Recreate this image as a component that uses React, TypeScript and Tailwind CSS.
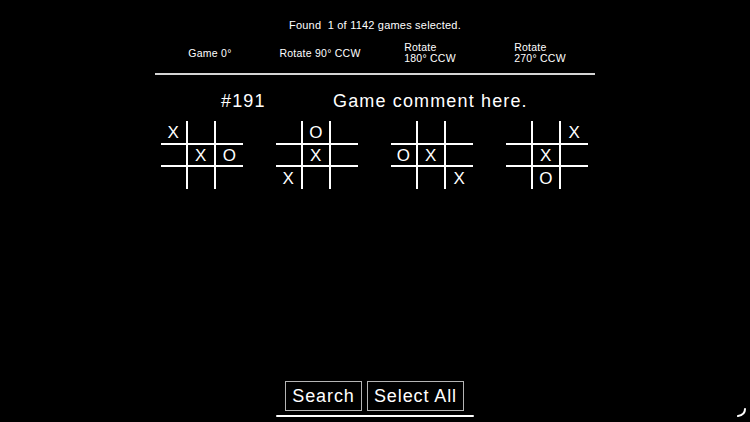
import React from 'react'

type Mark = 'X' | 'O' | ''

const boards: Mark[][] = [
  ['X', '', '', '', 'X', 'O', '', '', ''],
  ['', 'O', '', '', 'X', '', 'X', '', ''],
  ['', '', '', 'O', 'X', '', '', '', 'X'],
  ['', '', 'X', '', 'X', '', '', 'O', ''],
]

const columns = [
  ['Game 0°'],
  ['Rotate 90° CCW'],
  ['Rotate', '180° CCW'],
  ['Rotate', '270° CCW'],
]

function Board({ cells }: { cells: Mark[] }) {
  return (
    <div className="grid grid-cols-[27px_28px_27px] grid-rows-[24px_22px_22px] w-[82px] h-[68px]">
      {cells.map((c, i) => {
        const col = i % 3
        const row = Math.floor(i / 3)
        return (
          <div
            key={i}
            className={
              'flex items-center justify-center text-[17px] tracking-[0.5px] leading-none border-white ' +
              (col < 2 ? 'border-r-2 ' : '') +
              (row < 2 ? 'border-b-2' : '')
            }
          >
            {c}
          </div>
        )
      })}
    </div>
  )
}

export default function App() {
  return (
    <div className="relative w-[750px] h-[422px] bg-black text-white flex flex-col font-['Liberation_Sans',Arial,sans-serif] overflow-hidden">
      {/* status */}
      <div className="pt-[19px] text-center text-[11px] leading-[13px] tracking-[0.2px] whitespace-pre">
        Found  1 of 1142 games selected.
      </div>

      {/* column headers */}
      <div className="ml-[155px] w-[440px] mt-[6px] h-[30px] grid grid-cols-4 items-center text-[10.5px] leading-[11px] tracking-[0.25px]">
        {columns.map((lines, i) => (
          <div key={i} className="flex justify-center">
            <div className="text-left">
              {lines.map((l) => (
                <div key={l}>{l}</div>
              ))}
            </div>
          </div>
        ))}
      </div>
      <div className="ml-[155px] w-[440px] h-[2px] mt-[5px] bg-[#d4d4d4]" />

      {/* title row */}
      <div className="flex ml-[221px] mt-[15px] text-[18px] leading-[22px] tracking-[1.15px]">
        <span className="w-[112px]">#191</span>
        <span>Game comment here.</span>
      </div>

      {/* boards */}
      <div className="flex ml-[161px] mt-[9px] gap-[33px]">
        {boards.map((b, i) => (
          <Board key={i} cells={b} />
        ))}
      </div>

      {/* bottom buttons */}
      <div className="mt-auto flex flex-col items-center pb-[5px]">
        <div className="flex gap-[5px] ml-[-1px]">
          <button className="w-[77px] h-[30px] border border-[#b5b5b5] text-[18px] leading-none tracking-[0.9px]">
            Search
          </button>
          <button className="w-[97px] h-[30px] border border-[#b5b5b5] text-[18px] leading-none tracking-[0.9px]">
            Select All
          </button>
        </div>
        <div className="w-[198px] h-[2px] mt-[4px] rounded-full bg-white" />
      </div>

      {/* corner handle */}
      <svg className="absolute right-[3px] bottom-[3px]" width="12" height="12" viewBox="0 0 12 12">
        <path d="M10 2 Q10 8 3 9" stroke="white" strokeWidth="2" fill="none" strokeLinecap="round" />
      </svg>
    </div>
  )
}
